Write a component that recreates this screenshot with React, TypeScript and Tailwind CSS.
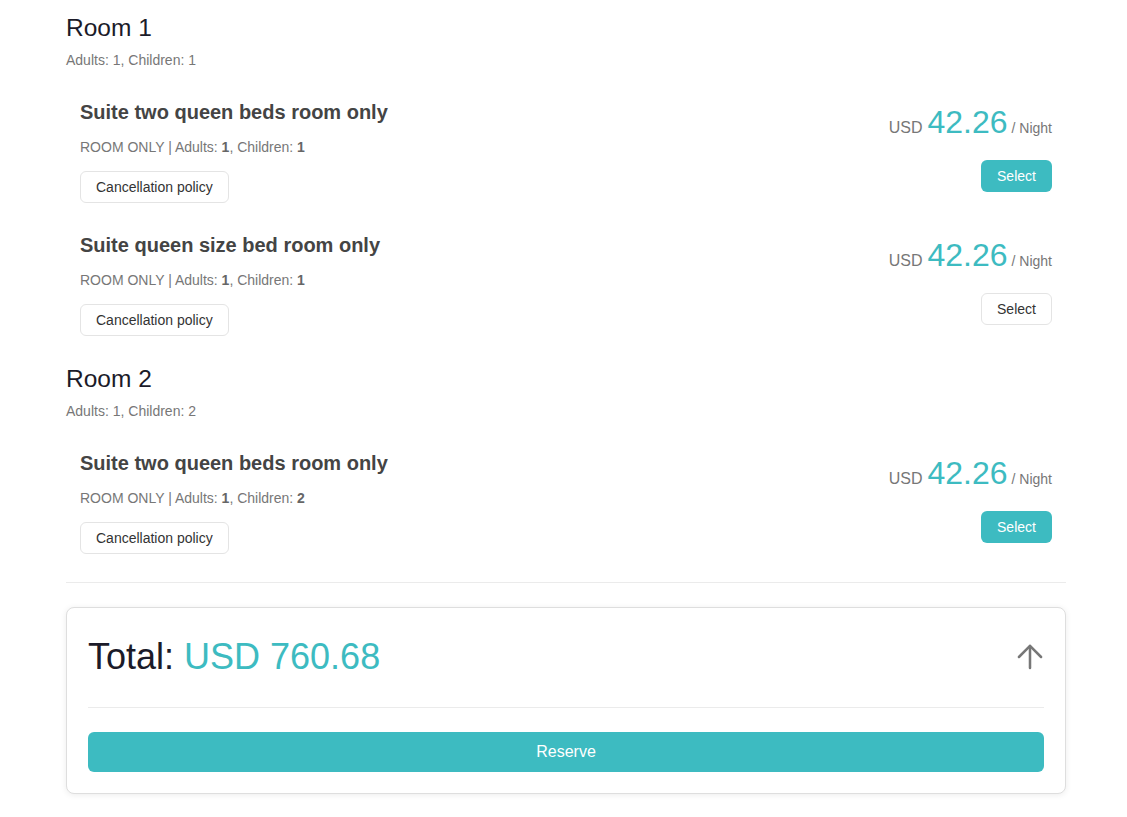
import React from "react";
import { ArrowUp } from "lucide-react";

type Offer = { name: string; adults: number; children: number; price: string; selected: boolean };

const rooms: { title: string; adults: number; children: number; offers: Offer[] }[] = [
  {
    title: "Room 1",
    adults: 1,
    children: 1,
    offers: [
      { name: "Suite two queen beds room only", adults: 1, children: 1, price: "42.26", selected: true },
      { name: "Suite queen size bed room only", adults: 1, children: 1, price: "42.26", selected: false },
    ],
  },
  {
    title: "Room 2",
    adults: 1,
    children: 2,
    offers: [{ name: "Suite two queen beds room only", adults: 1, children: 2, price: "42.26", selected: true }],
  },
];

function OfferRow({ offer }: { offer: Offer }) {
  return (
    <div className="flex justify-between px-[14px] py-[14px]">
      <div className="flex flex-col items-start">
        <h3 className="text-[20px] leading-[28px] font-bold text-[#444]">{offer.name}</h3>
        <p className="mt-[11px] text-[14px] leading-[20px] text-[#777]">
          ROOM ONLY | Adults: <b className="text-[#666]">{offer.adults}</b>, Children:{" "}
          <b className="text-[#666]">{offer.children}</b>
        </p>
        <button className="mt-[14px] h-[32px] px-[15px] rounded-[6px] border border-[#e4e4e4] bg-white text-[14px] text-[#333]">
          Cancellation policy
        </button>
      </div>
      <div className="flex flex-col items-end pt-[5px]">
        <div className="flex items-baseline h-[38px] leading-[38px]">
          <span className="text-[16px] text-[#777]">USD</span>
          <span className="ml-[5px] text-[32px] text-[#3dbbc1]">{offer.price}</span>
          <span className="ml-[4px] text-[14px] text-[#777]">/ Night</span>
        </div>
        {offer.selected ? (
          <button className="mt-[19px] h-[32px] w-[71px] rounded-[6px] bg-[#3dbbc1] text-[14px] text-white">Select</button>
        ) : (
          <button className="mt-[19px] h-[32px] w-[71px] rounded-[6px] border border-[#e4e4e4] bg-white text-[14px] text-[#333]">
            Select
          </button>
        )}
      </div>
    </div>
  );
}

export default function App() {
  return (
    <div className="min-h-screen bg-white font-['Liberation_Sans',Arial,sans-serif]">
      <div className="w-[1000px] ml-[66px] pt-[14px] pb-[22px]">
        {rooms.map((room, i) => (
          <section key={room.title} className={i > 0 ? "mt-[15px]" : ""}>
            <h2 className="text-[24.5px] leading-[28px] text-[#1b1b29]">{room.title}</h2>
            <p className="mt-[8px] text-[14px] leading-[20px] text-[#777]">
              Adults: {room.adults}, Children: {room.children}
            </p>
            <div className="mt-[14px]">
              {room.offers.map((o, j) => (
                <OfferRow key={j} offer={o} />
              ))}
            </div>
          </section>
        ))}
        <div className="mt-[14px] border-t border-[#ebebeb]" />
        <div className="mt-[24px] rounded-[8px] border border-[#dedede] bg-white p-[21px] shadow-[0_1px_6px_rgba(0,0,0,0.08)]">
          <div className="flex h-[56px] items-center justify-between">
            <div className="text-[36px] leading-[44px] text-[#1b1b29]">
              Total: <span className="text-[#3dbbc1]">USD 760.68</span>
            </div>
            <ArrowUp className="-mr-[5px] h-[38px] w-[38px] text-[#777]" strokeWidth={1.6} />
          </div>
          <div className="mt-[22px] border-t border-[#ebebeb]" />
          <button className="mt-[24px] h-[40px] w-full rounded-[6px] bg-[#3dbbc1] text-[16px] text-white">Reserve</button>
        </div>
      </div>
    </div>
  );
}
